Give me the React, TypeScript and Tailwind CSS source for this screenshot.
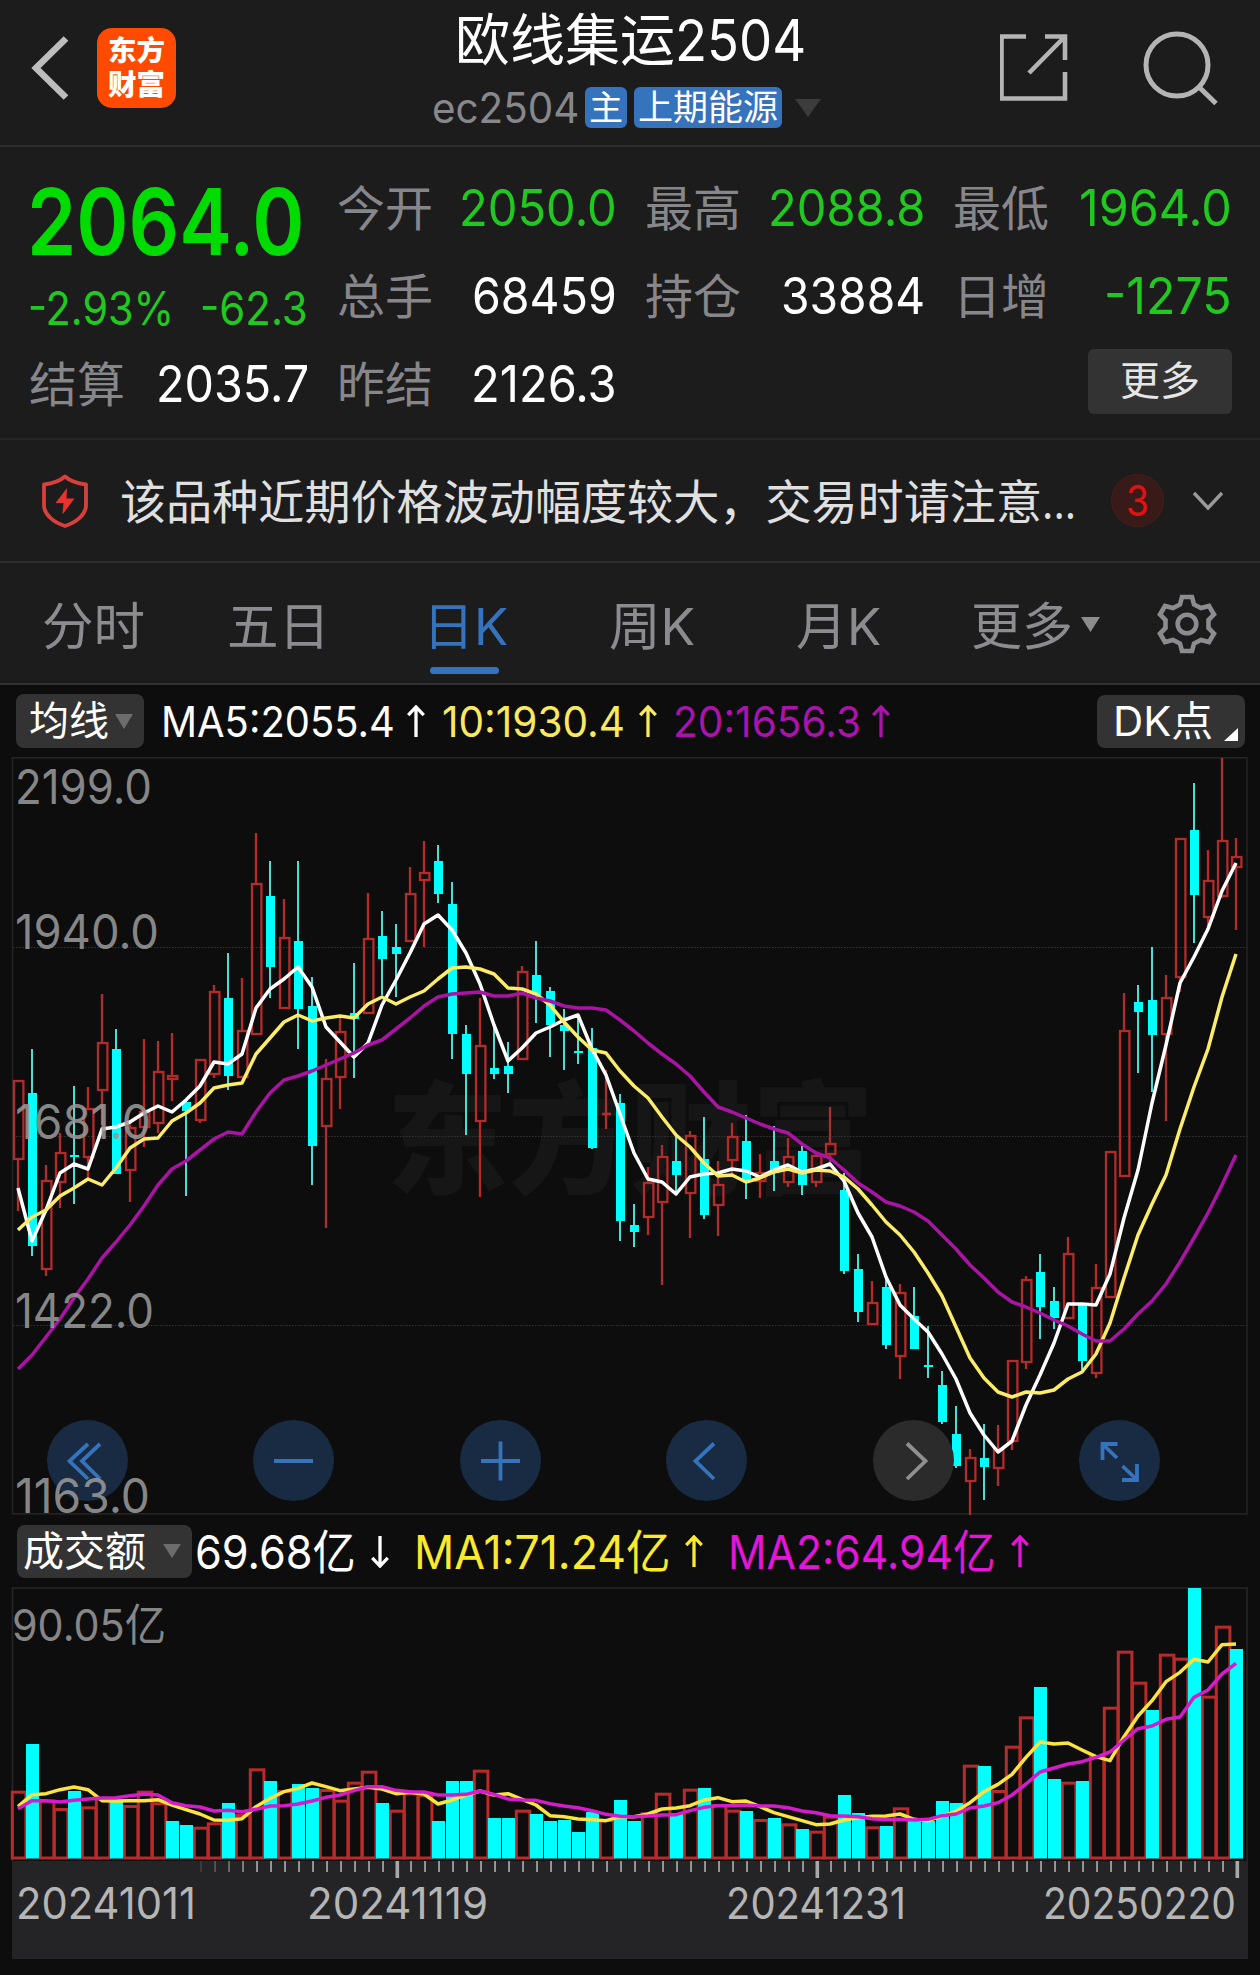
import { useLayoutEffect, useRef, useState, type ReactNode } from "react";

const FONT = "font-['Inter','Noto_Sans_CJK_SC',sans-serif]";

/** One line of text, condensed or widened to fill the width of its box. */
function Fit({ className = "", children }: { className?: string; children: ReactNode }) {
  const box = useRef<HTMLSpanElement>(null);
  const text = useRef<HTMLSpanElement>(null);
  const [scale, setScale] = useState(1);
  useLayoutEffect(() => {
    if (box.current && text.current && text.current.offsetWidth > 0) {
      setScale(box.current.clientWidth / text.current.offsetWidth);
    }
  }, []);
  return (
    <span ref={box} className={"block shrink-0 whitespace-nowrap leading-none " + className}>
      <span ref={text} className="inline-block origin-left leading-none" style={{ transform: `scaleX(${scale})` }}>
        {children}
      </span>
    </span>
  );
}

function Arrow({ down = false, className = "" }: { down?: boolean; className?: string }) {
  return (
    <svg viewBox="0 0 20 34" className={"h-[33px] w-[20px] shrink-0 " + className} fill="none" stroke="currentColor" strokeWidth="3.4">
      {down ? <path d="M10 1V32M2 23.5L10 32L18 23.5" /> : <path d="M10 33V2M2 10.5L10 2L18 10.5" />}
    </svg>
  );
}

function Caret({ className = "" }: { className?: string }) {
  return (
    <svg viewBox="0 0 20 16" preserveAspectRatio="none" className={"shrink-0 " + className} fill="currentColor">
      <path d="M0 0H20L10 16Z" />
    </svg>
  );
}

/* Candles: high, body top, body bottom, low (screen levels); 1 = rising, 0 = falling */
const CANDLES: number[][] = [
  [1081, 1081, 1159, 1211, 1], [1049, 1093, 1246, 1256, 0], [1165, 1181, 1269, 1276, 1], [1133, 1153, 1182, 1208, 1],
  [1086, 1155, 1157, 1204, 0], [1087, 1109, 1157, 1178, 1], [994, 1043, 1090, 1125, 1], [1029, 1049, 1174, 1174, 0],
  [1123, 1128, 1170, 1202, 1], [1039, 1112, 1127, 1147, 1], [1041, 1072, 1123, 1133, 1], [1033, 1076, 1079, 1101, 1],
  [1100, 1102, 1111, 1196, 0], [1060, 1060, 1120, 1123, 1], [985, 992, 1074, 1078, 1], [953, 998, 1076, 1090, 0],
  [978, 1031, 1077, 1078, 1], [833, 884, 1034, 1034, 1], [861, 896, 967, 998, 0], [899, 938, 1008, 1008, 1],
  [861, 941, 1009, 1049, 0], [977, 1006, 1146, 1185, 0], [1059, 1079, 1126, 1228, 1], [1017, 1032, 1077, 1109, 1],
  [963, 1013, 1019, 1078, 0], [893, 939, 1013, 1013, 1], [911, 936, 959, 995, 0], [924, 947, 954, 997, 0],
  [867, 894, 941, 941, 1], [841, 873, 880, 947, 1], [845, 861, 894, 903, 0], [882, 904, 1034, 1059, 0],
  [1025, 1034, 1074, 1135, 0], [998, 1046, 1121, 1197, 1], [1027, 1068, 1074, 1079, 0], [1042, 1066, 1074, 1093, 0],
  [966, 972, 1059, 1059, 1], [941, 975, 995, 1023, 0], [987, 991, 1025, 1057, 0], [1009, 1025, 1031, 1070, 0],
  [1017, 1051, 1053, 1064, 0], [1028, 1048, 1148, 1149, 0], [1070, 1114, 1115, 1129, 1], [1094, 1103, 1221, 1241, 0],
  [1204, 1225, 1232, 1247, 0], [1167, 1183, 1217, 1235, 1], [1145, 1157, 1202, 1285, 1], [1133, 1161, 1175, 1193, 0],
  [1131, 1136, 1193, 1238, 1], [1117, 1159, 1215, 1219, 0], [1161, 1185, 1205, 1236, 1], [1123, 1137, 1160, 1175, 1],
  [1115, 1141, 1182, 1199, 0], [1154, 1173, 1181, 1198, 1], [1126, 1161, 1173, 1191, 0], [1138, 1157, 1182, 1187, 1],
  [1146, 1151, 1185, 1195, 0], [1153, 1156, 1182, 1187, 1], [1107, 1144, 1154, 1163, 1], [1173, 1190, 1271, 1274, 0],
  [1254, 1269, 1312, 1322, 0], [1281, 1303, 1324, 1324, 1], [1277, 1287, 1345, 1349, 0], [1284, 1293, 1356, 1379, 1],
  [1287, 1316, 1349, 1349, 0], [1326, 1365, 1367, 1378, 0], [1371, 1385, 1422, 1424, 0], [1406, 1434, 1466, 1468, 0],
  [1449, 1458, 1481, 1515, 1], [1424, 1458, 1467, 1500, 0], [1425, 1449, 1468, 1486, 1], [1361, 1361, 1441, 1450, 1],
  [1276, 1280, 1362, 1369, 1], [1254, 1272, 1307, 1339, 0], [1287, 1301, 1318, 1329, 0], [1237, 1254, 1318, 1318, 1],
  [1303, 1305, 1361, 1370, 0], [1264, 1288, 1373, 1378, 1], [1152, 1152, 1297, 1297, 1], [993, 1031, 1176, 1176, 1],
  [985, 1002, 1012, 1073, 0], [947, 1000, 1035, 1092, 0], [975, 998, 1034, 1121, 1], [839, 839, 977, 992, 1],
  [783, 830, 895, 943, 0], [850, 881, 917, 927, 1], [758, 841, 896, 898, 1], [838, 857, 867, 930, 1],
];

const MA5 = [1188, 1241, 1210, 1173, 1164, 1169, 1129, 1127, 1122, 1113, 1106, 1112, 1100, 1086, 1062, 1064, 1054, 1008, 989, 979, 967, 987, 1027, 1042, 1057, 1043, 1005, 980, 953, 924, 915, 930, 953, 984, 1025, 1061, 1048, 1033, 1027, 1020, 1015, 1049, 1075, 1114, 1153, 1179, 1182, 1194, 1177, 1174, 1173, 1169, 1171, 1177, 1170, 1165, 1172, 1169, 1164, 1181, 1213, 1237, 1277, 1305, 1319, 1332, 1354, 1379, 1413, 1435, 1452, 1441, 1405, 1375, 1343, 1304, 1304, 1305, 1274, 1218, 1170, 1103, 1045, 983, 957, 929, 891, 863];
const MA10 = [1230, 1217, 1210, 1196, 1188, 1179, 1185, 1168, 1148, 1139, 1138, 1121, 1113, 1103, 1088, 1085, 1083, 1054, 1038, 1022, 1015, 1021, 1018, 1016, 1018, 1004, 997, 1004, 997, 991, 979, 968, 967, 969, 974, 988, 989, 994, 1005, 1022, 1037, 1050, 1053, 1071, 1086, 1098, 1117, 1135, 1147, 1163, 1176, 1175, 1182, 1178, 1172, 1169, 1173, 1170, 1171, 1177, 1189, 1205, 1222, 1235, 1252, 1273, 1296, 1327, 1358, 1378, 1392, 1397, 1392, 1393, 1390, 1379, 1372, 1354, 1323, 1278, 1235, 1204, 1175, 1129, 1087, 1049, 997, 954];
const MA20 = [1369, 1355, 1337, 1319, 1298, 1279, 1258, 1242, 1225, 1206, 1185, 1169, 1161, 1150, 1139, 1132, 1134, 1112, 1093, 1080, 1076, 1071, 1065, 1059, 1053, 1045, 1040, 1029, 1018, 1006, 997, 994, 993, 992, 996, 996, 993, 998, 1001, 1006, 1008, 1008, 1010, 1020, 1031, 1043, 1054, 1064, 1076, 1092, 1107, 1112, 1118, 1124, 1129, 1133, 1144, 1153, 1158, 1170, 1183, 1192, 1202, 1206, 1212, 1221, 1235, 1249, 1265, 1278, 1292, 1302, 1307, 1313, 1320, 1326, 1334, 1341, 1341, 1329, 1314, 1301, 1284, 1262, 1238, 1213, 1185, 1155];

/* Turnover levels are kept in thirds of a pixel, measured down from y = 1510 */
const VOLUME = [845, 702, 872, 897, 843, 892, 865, 875, 888, 845, 880, 933, 945, 953, 940, 879, 915, 778, 813, 843, 822, 834, 840, 872, 818, 785, 879, 902, 850, 855, 933, 813, 813, 782, 924, 924, 902, 912, 933, 930, 966, 906, 930, 870, 933, 910, 851, 910, 839, 834, 885, 902, 903, 930, 924, 943, 957, 965, 920, 855, 909, 952, 948, 895, 930, 933, 873, 879, 767, 768, 843, 710, 622, 531, 807, 818, 813, 740, 593, 425, 518, 600, 434, 446, 234, 560, 350, 417];
const VOLUME_FALLING = [1, 4, 7, 11, 12, 15, 18, 20, 21, 26, 30, 31, 32, 34, 35, 37, 38, 39, 40, 41, 43, 44, 47, 49, 52, 54, 56, 59, 60, 62, 64, 65, 66, 67, 69, 73, 74, 76, 81, 84, 87];
const VMA1 = [890, 854, 851, 839, 831, 839, 872, 873, 872, 872, 869, 885, 899, 912, 930, 931, 926, 890, 865, 845, 835, 819, 830, 842, 837, 832, 837, 851, 847, 852, 882, 870, 855, 843, 855, 851, 868, 885, 917, 920, 927, 929, 932, 920, 920, 912, 897, 894, 887, 870, 863, 875, 873, 890, 908, 920, 932, 944, 942, 930, 923, 919, 918, 912, 928, 932, 918, 904, 878, 845, 823, 793, 742, 696, 702, 699, 720, 740, 752, 680, 618, 572, 515, 487, 448, 456, 404, 402];
const VMA2 = [896, 872, 872, 876, 871, 867, 864, 863, 857, 852, 855, 878, 887, 891, 903, 901, 905, 898, 888, 887, 882, 873, 862, 855, 842, 830, 830, 841, 845, 846, 855, 855, 853, 843, 853, 867, 870, 871, 881, 888, 893, 902, 913, 919, 920, 918, 915, 914, 902, 892, 887, 887, 885, 888, 888, 893, 903, 908, 917, 918, 920, 926, 929, 928, 930, 928, 917, 912, 894, 888, 878, 855, 822, 786, 774, 762, 755, 742, 726, 690, 656, 648, 628, 621, 562, 540, 492, 460];

const cx = (i: number) => 18 + 14 * i;
const vy = (v: number) => 1510 + v / 3;
const line = (levels: number[]) => levels.map((y, i) => `${cx(i)},${y}`).join(" ");

const PRICE_LABELS: [string, number, number][] = [
  ["2199.0", 804, 134],
  ["1940.0", 949, 141],
  ["1681.0", 1139, 133],
  ["1422.0", 1328, 136],
  ["1163.0", 1513, 132],
];

function PriceChart() {
  return (
    <svg viewBox="0 757 1260 758" className={"block h-[758px] w-[1260px] " + FONT}>
      <text x="386" y="1184" fontSize="122" fontWeight="900" textLength="488" lengthAdjust="spacingAndGlyphs" fill="#161616">东方财富</text>
      <rect x="12.5" y="757.8" width="1234.5" height="756" fill="none" stroke="#242424" strokeWidth="1.6" />
      {[947.5, 1136.5, 1325.5].map((y) => (
        <line key={y} x1="13" x2="1247" y1={y} y2={y} stroke="#343434" strokeWidth="1" strokeDasharray="1.5 1.5" />
      ))}
      {CANDLES.map(([h, t, b, l, up], i) => {
        const x = cx(i);
        if (up) {
          const flat = b - t < 2;
          return (
            <g key={i} stroke="#b32b2b" strokeWidth="2.3" fill="none">
              <path d={`M${x} ${h}V${t}M${x} ${b}V${l}`} />
              {flat ? <path d={`M${x - 4} ${t}H${x + 5}`} strokeWidth="2.5" /> : <rect x={x - 4} y={t} width="9.4" height={b - t} />}
            </g>
          );
        }
        return (
          <g key={i}>
            <rect x={x - 1} y={h} width="2" height={l - h} fill="#4fdcd8" />
            <rect x={x - 4} y={t} width="9" height={b - t} fill="#00ffff" />
          </g>
        );
      })}
      <g fill="none" strokeWidth="3.5" strokeLinejoin="round">
        <polyline points={line(MA5)} stroke="#ffffff" />
        <polyline points={line(MA10)} stroke="#fbec6a" />
        <polyline points={line(MA20)} stroke="#a914a4" />
      </g>
    </svg>
  );
}

function PriceLabels() {
  return (
    <svg viewBox="0 757 1260 758" className={"pointer-events-none absolute inset-0 h-[758px] w-[1260px] overflow-visible " + FONT}>
      {PRICE_LABELS.map(([t, y, w]) => (
        <text key={t} x="15" y={y} fontSize="48" textLength={w + 3} lengthAdjust="spacingAndGlyphs" fill="#989898" fillOpacity="0.88">
          {t}
        </text>
      ))}
    </svg>
  );
}

function VolumeChart() {
  const bars = VOLUME.map((v, i) => ({ x: cx(i), y: vy(v), falling: VOLUME_FALLING.includes(i), i }));
  return (
    <svg viewBox="0 1587 1260 274" className={"block h-[274px] w-[1260px] " + FONT}>
      <path d="M12.5 1861V1588H1247V1861" fill="none" stroke="#262626" strokeWidth="1.6" />
      <text x="12" y="1641" fontSize="44" textLength="154" lengthAdjust="spacingAndGlyphs" fill="#868686">90.05亿</text>
      {bars.filter((b) => !b.falling).map((b) => (
        <rect key={b.i} x={b.x - 5.7} y={b.y + 0.5} width="13.6" height={1857.5 - b.y} fill="none" stroke="#b92b2b" strokeWidth="3" />
      ))}
      {bars.filter((b) => b.falling).map((b) => (
        <rect key={b.i} x={b.x - 6} y={b.y} width="13" height={1858.5 - b.y} fill="#00ffff" />
      ))}
      <g fill="none" strokeWidth="3.5" strokeLinejoin="round">
        <polyline points={line(VMA1.map(vy))} stroke="#fbe440" />
        <polyline points={line(VMA2.map(vy))} stroke="#d51bcb" />
      </g>
    </svg>
  );
}

function TimeAxis() {
  const ticks = Array.from({ length: 75 }, (_, k) => k + 13);
  const labels: [string, number, number][] = [
    ["20241011", 16, 180],
    ["20241119", 307, 181],
    ["20241231", 726, 180],
    ["20250220", 1043, 193],
  ];
  return (
    <svg viewBox="0 1861 1260 98" className={"block h-[98px] w-[1260px] " + FONT}>
      <rect x="12" y="1861" width="1236" height="98" fill="#242426" />
      {ticks.map((i) => {
        const major = i % 30 === 27;
        return (
          <rect
            key={i}
            x={cx(i) + (major ? -0.5 : 0.2)}
            y="1861"
            width={major ? 3.6 : 1.7}
            height={major ? 17 : 11}
            fill="#a8a8a8"
            fillOpacity={i < 17 ? (i - 12) * 0.2 : 1}
          />
        );
      })}
      {labels.map(([t, x, w]) => (
        <text key={t} x={x} y="1919" fontSize="44" textLength={w} lengthAdjust="spacingAndGlyphs" fill="#b5b5b5">
          {t}
        </text>
      ))}
    </svg>
  );
}

function Header() {
  return (
    <header className="flex h-[147px] border-b-2 border-[#2e2e2e]">
      <svg viewBox="0 0 97 146" className="h-[146px] w-[97px] shrink-0" fill="none" stroke="#bdbdbd" strokeWidth="6.6">
        <path d="M66 38.500L36 68L66 97.500" />
      </svg>
      <div className="mt-7 flex h-[80px] w-[79px] shrink-0 flex-col items-center justify-center rounded-[15px] bg-[#ff4a00] text-[28.500px] leading-[34px] font-black text-white">
        <span>东方</span>
        <span>财富</span>
      </div>
      <div className="flex w-[824px] flex-col pl-[256px]">
        <h1 className="mt-[11px] ml-[23px] flex h-[58px] items-center text-[56px] text-white">
          <Fit className="w-[220px]">欧线集运</Fit>
          <Fit className="w-[131px] text-[57px]">2504</Fit>
        </h1>
        <div className="mt-[17px] flex h-[43px] items-center">
          <Fit className="w-[147px] text-[42px] text-[#88888c]">ec2504</Fit>
          <span className="ml-[6px] flex h-[41px] w-[42px] items-center justify-center rounded-md bg-[#3573bd] text-[34px] leading-none text-white">主</span>
          <span className="ml-[7px] flex h-[41px] w-[148px] items-center justify-center rounded-md bg-[#3573bd] text-[35px] leading-none text-white">上期能源</span>
          <Caret className="ml-[13px] h-[18px] w-[26px] text-[#3c3c3c]" />
        </div>
      </div>
      <svg viewBox="1000 0 260 146" className="h-[146px] w-[260px] shrink-0" fill="none" stroke="#b4b4b4" strokeWidth="4.6">
        <path d="M1026 36.500H1001.500V98.500H1065V72M1045 36.500H1065V60M1029 73L1064.500 37" />
        <circle cx="1177" cy="65" r="31" strokeWidth="5" />
        <path d="M1199 87L1216 103.500" strokeWidth="5" />
      </svg>
    </header>
  );
}

function Stat({ label, value, valueClass, className }: { label: string; value: string; valueClass: string; className: string }) {
  return (
    <div className={"flex items-center justify-between " + className}>
      <Fit className="mt-[4px] w-[96px] text-[48px] text-[#87878b]">{label}</Fit>
      <Fit className={"text-[51px] " + valueClass}>{value}</Fit>
    </div>
  );
}

function Quote() {
  return (
    <section className="relative h-[293px] border-b-2 border-[#262626] pt-[16px] pr-[28px] pl-[29px]">
      <div className="flex">
        <div className="w-[280px] shrink-0 pt-[13px]">
          <Fit className="-ml-[2px] w-[278px] text-[92px] font-semibold text-[#00db00]">2064.0</Fit>
          <div className="mt-[16px] flex gap-[26px] text-[47px] text-[#20c820]">
            <Fit className="-ml-[1px] w-[146px]">-2.93%</Fit>
            <Fit className="w-[108px]">-62.3</Fit>
          </div>
        </div>
        <div className="ml-[28px] grid h-[176px] grid-cols-[280px_280px_279px] grid-rows-2 gap-x-7">
          <Stat label="今开" value="2050.0" className="" valueClass="w-[158px] text-[#20c820]" />
          <Stat label="最高" value="2088.8" className="" valueClass="w-[157px] text-[#20c820]" />
          <Stat label="最低" value="1964.0" className="" valueClass="w-[153px] text-[#20c820]" />
          <Stat label="总手" value="68459" className="" valueClass="w-[145px] text-white" />
          <Stat label="持仓" value="33884" className="" valueClass="w-[144px] text-white" />
          <Stat label="日增" value="-1275" className="" valueClass="w-[128px] text-[#20c820]" />
        </div>
      </div>
      <div className="flex h-[88px] items-center">
        <Stat label="结算" value="2035.7" className="w-[280px]" valueClass="w-[153px] text-white" />
        <Stat label="昨结" value="2126.3" className="ml-[28px] w-[280px]" valueClass="w-[146px] text-white" />
        <button className="mb-[4px] ml-auto h-[65px] w-[144px] rounded-md bg-[#333333] text-[40px] leading-none text-[#e6e6e6]">更多</button>
      </div>
    </section>
  );
}

function Notice() {
  return (
    <section className="flex h-[123px] items-center border-b-2 border-[#2e2e2e] text-[#e0e0e0]">
      <svg viewBox="0 0 48 56" className="ml-[41px] h-[56px] w-[48px] shrink-0">
        <path d="M24 3.500C29 8 37 10.500 45 11.500V32C45 42 35 49.500 24 53C13 49.500 3 42 3 32V11.500C11 10.500 19 8 24 3.500Z" fill="none" stroke="#d8403c" strokeWidth="3.800" strokeLinejoin="round" />
        <path d="M26 15L14.500 30H22.500L21.500 41.500L33.500 25.500H25.500Z" fill="#e8322e" />
      </svg>
      <div className="mt-[4px] ml-[31px] flex w-[956px] text-[46.500px]">
        <Fit className="w-[922px]">该品种近期价格波动幅度较大，交易时请注意</Fit>
        <Fit className="w-[34px]">...</Fit>
      </div>
      <span className="ml-[35px] flex h-[53px] w-[53px] shrink-0 items-center justify-center rounded-full border border-[#4a1c1b] bg-[#381a19] text-[42px] leading-none text-[#e01212]">
        <Fit className="w-[23px]">3</Fit>
      </span>
      <svg viewBox="0 0 32 20" className="ml-[28px] h-[20px] w-[32px]" fill="none" stroke="#9a9a9a" strokeWidth="3.400">
        <path d="M2 2L16 17L30 2" />
      </svg>
    </section>
  );
}

function Tabs() {
  return (
    <nav className="flex h-[122px] items-center border-b-2 border-[#323232] text-[51px] leading-none text-[#8c8c90]">
      <Fit className="mt-[6px] ml-[42px] w-[103px]">分时</Fit>
      <Fit className="mt-[6px] ml-[82px] w-[103px]">五日</Fit>
      <span className="relative ml-[93px] text-[#3573bd]">
        <Fit className="mt-[6px] w-[85px]">日K</Fit>
        <span className="absolute top-[72px] left-[7px] h-[7px] w-[69px] rounded-full bg-[#3573bd]" />
      </span>
      <Fit className="mt-[6px] ml-[101px] w-[86px]">周K</Fit>
      <Fit className="mt-[6px] ml-[101px] w-[85px]">月K</Fit>
      <Fit className="mt-[6px] ml-[90px] w-[102px]">更多</Fit>
      <Caret className="mt-[3px] ml-[8px] h-[15px] w-[19px]" />
      <svg viewBox="0 0 60 60" className="mt-[1px] ml-[57px] h-[60px] w-[60px]" fill="none" stroke="currentColor" strokeWidth="4.600">
        <path d="M25 3H35L37 10.500L44 14L52 12L57 20.500L51.500 26V34L57 39.500L52 48L44 46L37 49.500L35 57H25L23 49.500L16 46L8 48L3 39.500L8.500 34V26L3 20.500L8 12L16 14L23 10.500Z" />
        <circle cx="30" cy="30" r="9.300" />
      </svg>
    </nav>
  );
}

const CONTROL = "flex h-[81px] w-[81px] items-center justify-center rounded-full ";

function ChartControls() {
  const icons = [
    "M41 24L22.500 41L41 59M53 24L35 41L53 59",
    "M21 41H60",
    "M21 41H60M40.500 21.500V60.500",
    "M48 23.500L29.500 41L48 59",
    "M34 23.500L52.500 41L34 59",
    "M38.500 24H23.500V40M24 24.500L38 38M43 60H58V44M57.500 59.500L43.500 46",
  ];
  return (
    <div className="absolute top-[663px] left-[47px] flex w-[1113px] justify-between text-[#3573bd]">
      {icons.map((d, i) => (
        <button key={d} className={CONTROL + (i === 4 ? "bg-[#2b2b2b] text-[#909090]" : "bg-[#182b42]")}>
          <svg viewBox="0 0 81 81" className="h-[81px] w-[81px]" fill="none" stroke="currentColor" strokeWidth="3.800">
            <path d={d} />
          </svg>
        </button>
      ))}
    </div>
  );
}

export default function App() {
  return (
    <main className={"h-[1975px] w-[1260px] overflow-hidden bg-[#0d0d0d] " + FONT}>
      <div className="bg-[#1c1c1c]">
        <Header />
        <Quote />
        <Notice />
        <Tabs />
      </div>
      <div className="flex h-[72px] items-center text-[43px]">
        <button className="ml-4 flex h-[54px] w-[128px] shrink-0 items-center rounded-lg bg-[#333333] pl-[13px] text-[40px] leading-none text-white">
          均线
          <Caret className="ml-[6px] h-[15px] w-[18px] text-[#6c6c6c]" />
        </button>
        <Fit className="ml-[17px] w-[234px] text-white">MA5:2055.4</Fit>
        <Arrow className="ml-[11px] text-white" />
        <Fit className="ml-[16px] w-[183px] text-[#f9e961]">10:1930.4</Fit>
        <Arrow className="ml-[13px] text-[#f9e961]" />
        <Fit className="ml-[15px] w-[188px] text-[#ac12ac]">20:1656.3</Fit>
        <Arrow className="ml-[10px] text-[#ac12ac]" />
        <button className="relative mr-[15px] ml-auto flex h-[53px] w-[148px] items-center rounded-lg bg-[#333333] pl-[15px] text-[41px] text-white">
          <Fit className="w-[100px]">DK点</Fit>
          <svg viewBox="0 0 14 13" className="absolute right-[7px] bottom-[7px] h-[13px] w-[14px]" fill="#ffffff">
            <path d="M14 0V13H0Z" />
          </svg>
        </button>
      </div>
      <div className="relative">
        <PriceChart />
        <ChartControls />
        <PriceLabels />
      </div>
      <div className="flex h-[72px] items-center text-[47px]">
        <button className="ml-[17px] flex h-[53px] w-[175px] shrink-0 items-center rounded-lg bg-[#333333] pl-[6px] text-[41px] leading-none text-white">
          成交额
          <Caret className="ml-[17px] h-[14px] w-[18px] text-[#6c6c6c]" />
        </button>
        <Fit className="ml-[3px] w-[161px] text-white">69.68亿</Fit>
        <Arrow down className="ml-[14px] text-white" />
        <Fit className="ml-[24px] w-[257px] text-[#fbe92e]">MA1:71.24亿</Fit>
        <Arrow className="ml-[13px] text-[#fbe92e]" />
        <Fit className="ml-[24px] w-[268px] text-[#e315d8]">MA2:64.94亿</Fit>
        <Arrow className="ml-[14px] text-[#e315d8]" />
      </div>
      <VolumeChart />
      <TimeAxis />
    </main>
  );
}
